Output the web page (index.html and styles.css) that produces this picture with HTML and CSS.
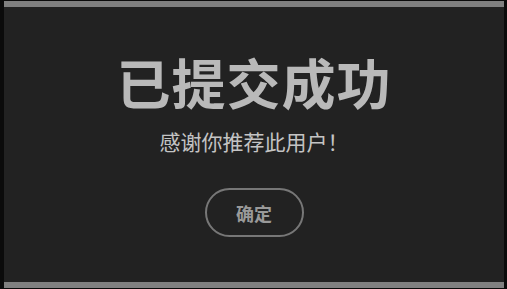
FILE: index.html
```html
<!DOCTYPE html>
<html lang="zh-CN">
<head>
    <meta charset="UTF-8">
    <meta name="viewport" content="width=device-width, initial-scale=1.0">
    <title>提交成功</title>
    <link rel="stylesheet" href="styles.css">
</head>
<body>
    <div class="dialog">
        <div class="bar"></div>
        <div class="content">
            <h1 class="title">已提交成功</h1>
            <p class="message">感谢你推荐此用户！</p>
            <button class="ok-button">确定</button>
        </div>
        <div class="bar"></div>
    </div>
</body>
</html>
```

FILE: styles.css
```css
body {
    margin: 0;
    background: #0b0b0b;
    font-family: "Noto Sans CJK SC", "Noto Sans", sans-serif;
    height: 289px;
    overflow: hidden;
}
.dialog {
    margin: 1px 3px 0 4px;
    width: 500px;
    height: 287px;
    background: #222222;
    display: flex;
    flex-direction: column;
}
.bar {
    height: 6px;
    background: #808080;
}
.content {
    flex: 1;
    display: flex;
    flex-direction: column;
    align-items: center;
}
.title {
    margin: 46px 0 0;
    font-size: 54px;
    line-height: 58px;
    font-weight: 700;
    color: #b9b9b9;
    letter-spacing: 1px;
}
.message {
    margin: 17px 0 0;
    font-size: 21px;
    line-height: 26px;
    color: #c4c4c4;
}
.ok-button {
    margin-top: 34px;
    width: 99px;
    height: 49px;
    border: 2px solid #777777;
    border-radius: 25px;
    background: transparent;
    color: #999999;
    font-family: inherit;
    font-size: 18px;
    font-weight: 700;
    cursor: pointer;
}
```
